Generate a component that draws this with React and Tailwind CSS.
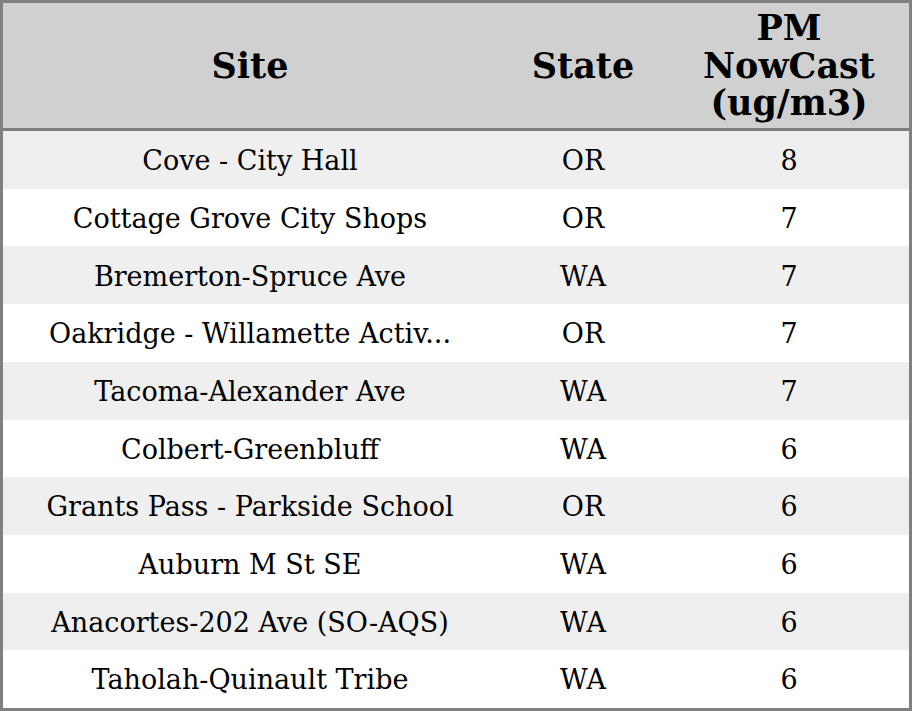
import React from 'react';

const rows = [
  { site: 'Cove - City Hall', state: 'OR', value: 8 },
  { site: 'Cottage Grove City Shops', state: 'OR', value: 7 },
  { site: 'Bremerton-Spruce Ave', state: 'WA', value: 7 },
  { site: 'Oakridge - Willamette Activ...', state: 'OR', value: 7 },
  { site: 'Tacoma-Alexander Ave', state: 'WA', value: 7 },
  { site: 'Colbert-Greenbluff', state: 'WA', value: 6 },
  { site: 'Grants Pass - Parkside School', state: 'OR', value: 6 },
  { site: 'Auburn M St SE', state: 'WA', value: 6 },
  { site: 'Anacortes-202 Ave (SO-AQS)', state: 'WA', value: 6 },
  { site: 'Taholah-Quinault Tribe', state: 'WA', value: 6 },
];

const App = () => {
  return (
    <div className="w-[912px] h-[711px] flex flex-col border-[3px] border-[#808080] bg-white text-black font-['DejaVu_Serif',serif]">
      {/* header */}
      <div className="grid grid-cols-[494px_172px_1fr] h-[128px] shrink-0 bg-[#d0d0d0] border-b-[3px] border-[#808080] text-[35px] font-bold leading-[37.5px]">
        <div className="flex items-center justify-center text-center">Site</div>
        <div className="flex items-center justify-center text-center">State</div>
        <div className="flex items-center justify-center text-center">
          PM
          <br />
          NowCast
          <br />
          (ug/m3)
        </div>
      </div>

      {/* body */}
      <div className="flex-1 flex flex-col">
        {rows.map((row, i) => (
          <div
            key={row.site}
            className={`flex-1 grid grid-cols-[494px_172px_1fr] pt-[3px] text-[27px] ${i % 2 === 0 ? 'bg-[#efefef]' : 'bg-white'}`}
          >
            <div className="flex items-center justify-center whitespace-nowrap">{row.site}</div>
            <div className="flex items-center justify-center">{row.state}</div>
            <div className="flex items-center justify-center">{row.value}</div>
          </div>
        ))}
      </div>
    </div>
  );
};

export default App;
